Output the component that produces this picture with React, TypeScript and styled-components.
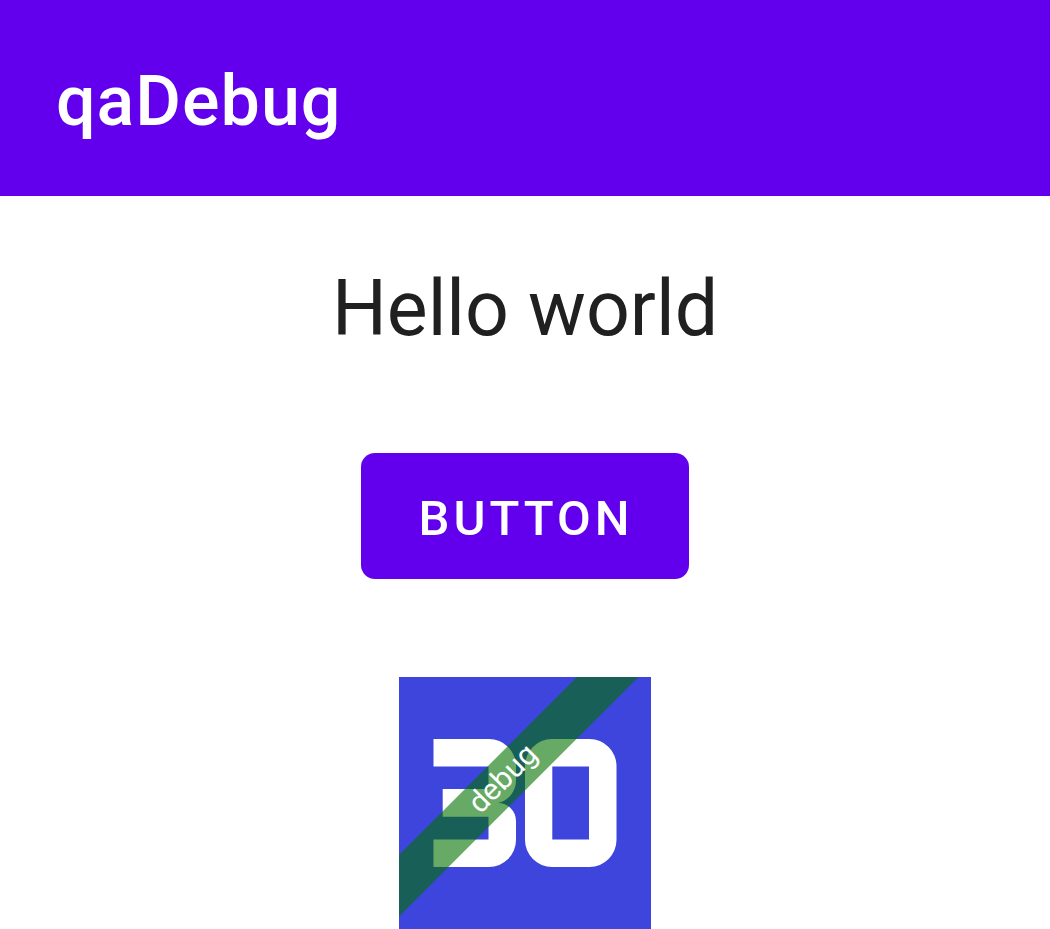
import React from 'react';
import styled, { createGlobalStyle } from 'styled-components';

const GlobalStyle = createGlobalStyle`
  body {
    margin: 0;
    background: #ffffff;
    font-family: Roboto, sans-serif;
  }
`;

const AppBar = styled.header`
  padding: 59px 56px 53px;
  background: #6200ee;
  color: #ffffff;
`;

const Title = styled.h1`
  margin: 0;
  font-size: 70px;
  font-weight: 500;
  line-height: 84px;
  letter-spacing: 1px;
`;

const Content = styled.main`
  display: flex;
  flex-direction: column;
  align-items: center;
  padding-top: 65px;
`;

const Greeting = styled.p`
  margin: 0 0 96px;
  font-size: 77px;
  line-height: 96px;
  color: #202020;
`;

const ActionButton = styled.button`
  margin: 0 0 98px;
  padding: 36px 56px 30px 58px;
  border: 0;
  border-radius: 14px;
  background: #6200ee;
  color: #ffffff;
  font: 500 49px/60px Roboto, sans-serif;
  letter-spacing: 4px;
  text-transform: uppercase;
`;

const Logo = styled.svg`
  display: block;
  width: 252px;
  height: 252px;
`;

const RibbonLabel = styled.text`
  font: 400 30px Roboto, sans-serif;
  fill: #ffffff;
  text-anchor: middle;
`;

export default function App() {
  return (
    <>
      <GlobalStyle />
      <AppBar>
        <Title>qaDebug</Title>
      </AppBar>
      <Content>
        <Greeting>Hello world</Greeting>
        <ActionButton type="button">Button</ActionButton>
        <Logo viewBox="0 0 252 252" role="img" aria-label="30 debug">
          <rect width="252" height="252" fill="#3d45dc" />
          <path
            fill="#ffffff"
            d="M34.500 62H90A27 27 0 0 1 117 89V103A23 23 0 0 1 99 126A18 18 0 0 1 117 144V163A27 27 0 0 1 90 190H34.500V162.500H89.500V139.700H43.700V112H89.500V89.500H34.500Z"
          />
          <path
            fill="#ffffff"
            fillRule="evenodd"
            d="M153 62H190.500A27 27 0 0 1 217.500 89V163A27 27 0 0 1 190.500 190H153A27 27 0 0 1 126 163V89A27 27 0 0 1 153 62ZM153.300 89.500V162.500H190V89.500Z"
          />
          <path fill="#007200" fillOpacity="0.6" d="M178 0H239.500L0 239.500V178Z" />
          <RibbonLabel transform="translate(110.500 108.500) rotate(-45)">debug</RibbonLabel>
        </Logo>
      </Content>
    </>
  );
}
